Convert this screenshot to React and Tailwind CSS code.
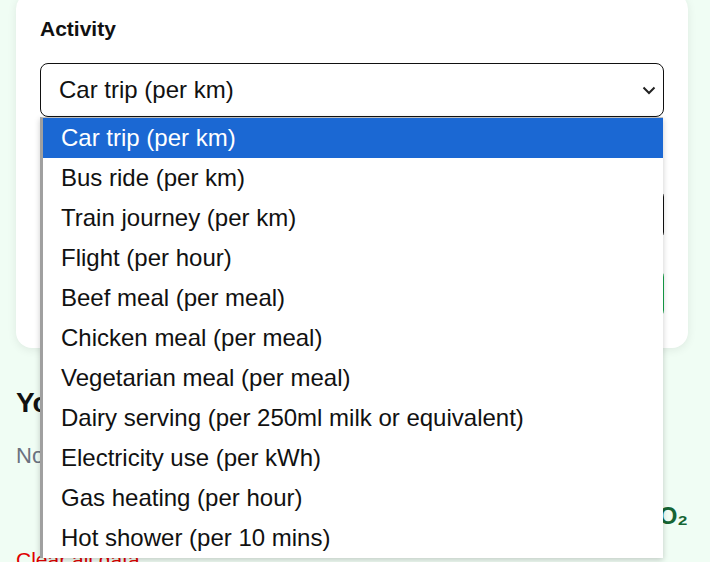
import React from "react";

const options = [
  "Car trip (per km)",
  "Bus ride (per km)",
  "Train journey (per km)",
  "Flight (per hour)",
  "Beef meal (per meal)",
  "Chicken meal (per meal)",
  "Vegetarian meal (per meal)",
  "Dairy serving (per 250ml milk or equivalent)",
  "Electricity use (per kWh)",
  "Gas heating (per hour)",
  "Hot shower (per 10 mins)",
];

export default function App() {
  return (
    <div
      className="h-[562px] w-[710px] overflow-hidden bg-[#f0fdf4]"
      style={{ fontFamily: '"Liberation Sans", Arial, sans-serif' }}
    >
      <div className="ml-4 w-[672px]">
        <div className="relative -mt-[7px] rounded-2xl bg-white px-6 pt-[21px] pb-[30px] shadow-[0_2px_10px_rgba(0,0,0,0.08)]">
          <div className="text-[21px] leading-[30px] font-bold text-[#111]">Activity</div>
          <div className="mt-[19px] flex h-[54px] items-center justify-between rounded-[8px] border border-[#111] pl-[18px] pr-[6px] text-[24px] text-[#111]">
            <span>Car trip (per km)</span>
            <svg width="14" height="10" viewBox="0 0 14 10" className="mr-[1px]">
              <path d="M1.5 2.5 L7 8 L12.5 2.5" fill="none" stroke="#222" strokeWidth="2" />
            </svg>
          </div>
          <div className="mt-[18px] text-[21px] leading-[30px] font-bold text-[#111]">Amount</div>
          <div className="mt-[24px] h-[51px] rounded-[8px] border border-[#111]"></div>
          <button className="mt-[29px] block h-[49px] w-full rounded-[8px] bg-[#16a34a] text-[21px] font-bold text-white">
            Add activity
          </button>

          <div className="absolute left-[24px] top-[124px] z-10 w-[623px] border-t border-l-[3px] border-t-[#bdbdbd] border-l-[#a0a0a0] bg-white shadow-[0_2px_6px_rgba(0,0,0,0.2)]">
            {options.map((o, i) => (
              <div
                key={o}
                className={
                  i === 0
                    ? "flex h-[40px] items-center bg-[#1b68d3] pl-[18px] text-[24px] text-white"
                    : "flex h-[40px] items-center pl-[18px] text-[24px] text-[#111]"
                }
              >
                {o}
              </div>
            ))}
          </div>
        </div>

        <h2 className="mt-[37px] text-[28px] leading-[36px] font-bold text-[#111]">Your activity log</h2>
        <p className="mt-[19px] text-[22px] leading-[32px] text-[#6b7280]">No activities logged yet.</p>
        <div className="mt-[28px] flex justify-end text-[24px] leading-[32px] font-bold text-[#166534]">
          Total: 0.00 kg CO₂
        </div>
        <div className="mt-[13px] text-[21px] leading-[30px] text-[#e00000]">Clear all data</div>
      </div>
    </div>
  );
}
